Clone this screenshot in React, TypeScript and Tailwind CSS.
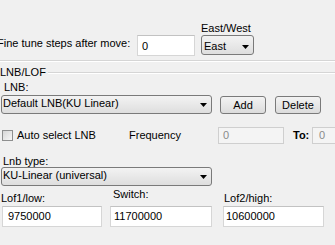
import React from 'react'

function Arrow() {
  return (
    <svg width="7" height="4" viewBox="0 0 7 4" className="shrink-0">
      <path d="M0 0h7L3.5 4z" fill="#000" />
    </svg>
  )
}

function Combo({ value, className }: { value: string; className: string }) {
  return (
    <div
      className={`flex items-start justify-between rounded-[3px] border border-[#7a7a7a] bg-linear-to-b from-[#f3f3f3] to-[#dedede] pl-[1px] pr-[4px] leading-[13px] ${className}`}
    >
      <span>{value}</span>
      <span className="self-center">
        <Arrow />
      </span>
    </div>
  )
}

function Button({ label }: { label: string }) {
  return (
    <div className="flex h-[18px] w-[46px] items-center justify-center rounded-[3px] border border-[#7a7a7a] bg-linear-to-b from-[#f3f3f3] to-[#dcdcdc] leading-[13px]">
      {label}
    </div>
  )
}

function TextBox({ value, className }: { value: string; className: string }) {
  return <div className={`border border-[#d6d6d6] border-t-[#c2c2c2] bg-white leading-[13px] ${className}`}>{value}</div>
}

export default function App() {
  return (
    <div className="h-[245px] w-[335px] overflow-hidden bg-[#f0f0f0] font-['Liberation_Sans',Arial,sans-serif] text-[11px] text-black">
      <div className="mt-[22px] h-[13px] pl-[201px] leading-[13px]">East/West</div>

      <div className="flex h-[21px] items-start">
        <div className="-ml-[3px] w-[140px] shrink-0 whitespace-nowrap pt-[2px] leading-[13px]">Fine tune steps after move:</div>
        <TextBox value="0" className="h-[21px] w-[58px] pl-[4px] pt-[4px]" />
        <Combo value="East" className="ml-[6px] h-[20px] w-[53px] pl-[2px] pt-[4px]" />
      </div>

      <div className="mt-[4px] h-[2px] border-t border-b border-t-[#d5d5d5] border-b-white" />

      <div className="mt-[4px] flex h-[13px] items-start leading-[13px]">
        <span className="whitespace-nowrap">LNB/LOF</span>
        <div className="ml-[2px] mt-[6px] h-[2px] flex-1 border-t border-b border-t-[#d5d5d5] border-b-white" />
      </div>

      <div className="mt-[2px] pl-[4px] leading-[13px]">LNB:</div>

      <div className="mt-[1px] flex items-start">
        <Combo value="Default LNB(KU Linear)" className="ml-[1px] h-[19px] w-[211px] pt-[1px]" />
        <div className="ml-[8px] mt-[1px]">
          <Button label="Add" />
        </div>
        <div className="ml-[9px] mt-[1px]">
          <Button label="Delete" />
        </div>
      </div>

      <div className="mt-[13px] flex h-[17px] items-start leading-[13px]">
        <div className="ml-[2px] mt-[3px] h-[11px] w-[11px] shrink-0 border border-[#8e8f8f] bg-linear-to-br from-[#d6d6d6] to-[#f7f7f7]" />
        <span className="ml-[4px] mt-[2px] w-[112px] shrink-0 whitespace-nowrap">Auto select LNB</span>
        <span className="mt-[2px] w-[89px] shrink-0">Frequency</span>
        <div className="h-[17px] w-[66px] shrink-0 border border-[#cfcfcf] bg-[#f4f4f4] pl-[4px] pt-[1px] text-[#8a8a8a]">0</div>
        <span className="ml-[9px] mt-[2px] w-[19px] shrink-0 font-bold">To:</span>
        <div className="h-[17px] w-[40px] shrink-0 border border-[#cfcfcf] bg-[#f4f4f4] pl-[6px] pt-[1px] text-[#8a8a8a]">0</div>
      </div>

      <div className="mt-[11px] h-[12px] pl-[3px] leading-[12px]">Lnb type:</div>

      <Combo value="KU-Linear (universal)" className="ml-[1px] h-[19px] w-[211px] pt-[1px]" />

      <div className="mt-[2px] flex items-start leading-[13px]">
        <div className="flex w-[110px] shrink-0 flex-col">
          <span className="mt-[4px] h-[13px] pl-[1px]">Lof1/low:</span>
          <TextBox value="9750000" className="ml-[2px] mt-[1px] h-[21px] w-[100px] pl-[5px] pt-[3px]" />
        </div>
        <div className="flex w-[113px] shrink-0 flex-col">
          <span className="h-[17px] pl-[3px]">Switch:</span>
          <TextBox value="11700000" className="mt-[1px] h-[21px] w-[102px] pl-[3px] pt-[3px]" />
        </div>
        <div className="flex flex-col">
          <span className="mt-[4px] h-[13px] pl-[1px]">Lof2/high:</span>
          <TextBox value="10600000" className="mt-[1px] h-[21px] w-[101px] pl-[2px] pt-[3px]" />
        </div>
      </div>
    </div>
  )
}
